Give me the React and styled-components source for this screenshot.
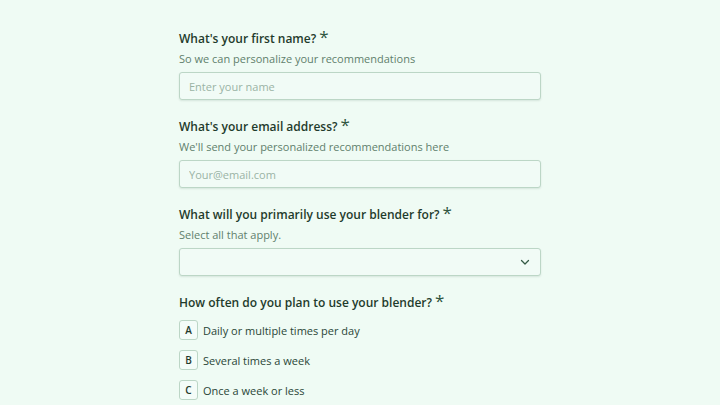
import React from "react";
import styled, { createGlobalStyle } from "styled-components";

const Global = createGlobalStyle`
  html, body { margin: 0; padding: 0; background: #effbf4; }
  body { font-family: "Open Sans", Lato, sans-serif; color: #1e3a2b; }
`;

const Page = styled.div`
  width: 362px;
  margin: 0 auto;
  padding-top: 28px;
  display: flex;
  flex-direction: column;
  gap: 16px;
`;

const Field = styled.div`
  display: flex;
  flex-direction: column;
`;

const Label = styled.div`
  font-size: 12px;
  font-weight: 600;
  line-height: 21px;
  height: 21px;
  color: #1f3b2c;
  display: flex;
  align-items: flex-start;
  gap: 3px;
`;

const Star = styled.span`
  font-size: 17px;
  line-height: 17px;
  font-weight: 400;
  color: #2f5540;
`;

const Hint = styled.div`
  font-size: 11px;
  line-height: 19px;
  color: #5f7f6c;
`;

const Input = styled.input`
  box-sizing: border-box;
  height: 28px;
  width: 100%;
  margin-top: 4px;
  border: 1px solid #bcd6c6;
  border-radius: 3px;
  background: #f1fbf6;
  box-shadow: 0 1px 2px rgba(30, 70, 50, 0.12);
  padding: 0 9px;
  font-family: "Open Sans", Lato, sans-serif;
  font-size: 11px;
  color: #1f3b2c;
  outline: none;
  &::placeholder { color: #9ab3a5; }
`;

const Select = styled.div`
  box-sizing: border-box;
  height: 28px;
  margin-top: 4px;
  border: 1px solid #bcd6c6;
  border-radius: 3px;
  background: #f1fbf6;
  box-shadow: 0 1px 2px rgba(30, 70, 50, 0.12);
  display: flex;
  align-items: center;
  justify-content: flex-end;
  padding-right: 9px;
`;

const Options = styled.div`
  display: flex;
  flex-direction: column;
  gap: 10px;
  margin-top: 7px;
`;

const Option = styled.div`
  display: flex;
  align-items: center;
  gap: 5px;
  height: 20px;
`;

const Key = styled.span`
  box-sizing: border-box;
  width: 19px;
  height: 20px;
  border: 1px solid #bcd6c6;
  border-radius: 3px;
  background: #f4fcf8;
  display: flex;
  align-items: center;
  justify-content: center;
  font-size: 10px;
  font-weight: 600;
  color: #1f3b2c;
`;

const OptText = styled.span`
  font-size: 11px;
  color: #2a4637;
`;

const Chevron = () => (
  <svg width="12" height="12" viewBox="0 0 24 24" fill="none" stroke="#355a46" strokeWidth="2.6" strokeLinecap="round" strokeLinejoin="round">
    <path d="M5 9l7 7 7-7" />
  </svg>
);

export default function App() {
  return (
    <>
      <Global />
      <Page>
        <Field>
          <Label>What's your first name?<Star>*</Star></Label>
          <Hint>So we can personalize your recommendations</Hint>
          <Input placeholder="Enter your name" />
        </Field>
        <Field>
          <Label>What's your email address?<Star>*</Star></Label>
          <Hint>We'll send your personalized recommendations here</Hint>
          <Input placeholder="Your@email.com" />
        </Field>
        <Field>
          <Label>What will you primarily use your blender for?<Star>*</Star></Label>
          <Hint>Select all that apply.</Hint>
          <Select><Chevron /></Select>
        </Field>
        <Field>
          <Label>How often do you plan to use your blender?<Star>*</Star></Label>
          <Options>
            {[
              ["A", "Daily or multiple times per day"],
              ["B", "Several times a week"],
              ["C", "Once a week or less"],
            ].map(([k, t]) => (
              <Option key={k}>
                <Key>{k}</Key>
                <OptText>{t}</OptText>
              </Option>
            ))}
          </Options>
        </Field>
      </Page>
    </>
  );
}
